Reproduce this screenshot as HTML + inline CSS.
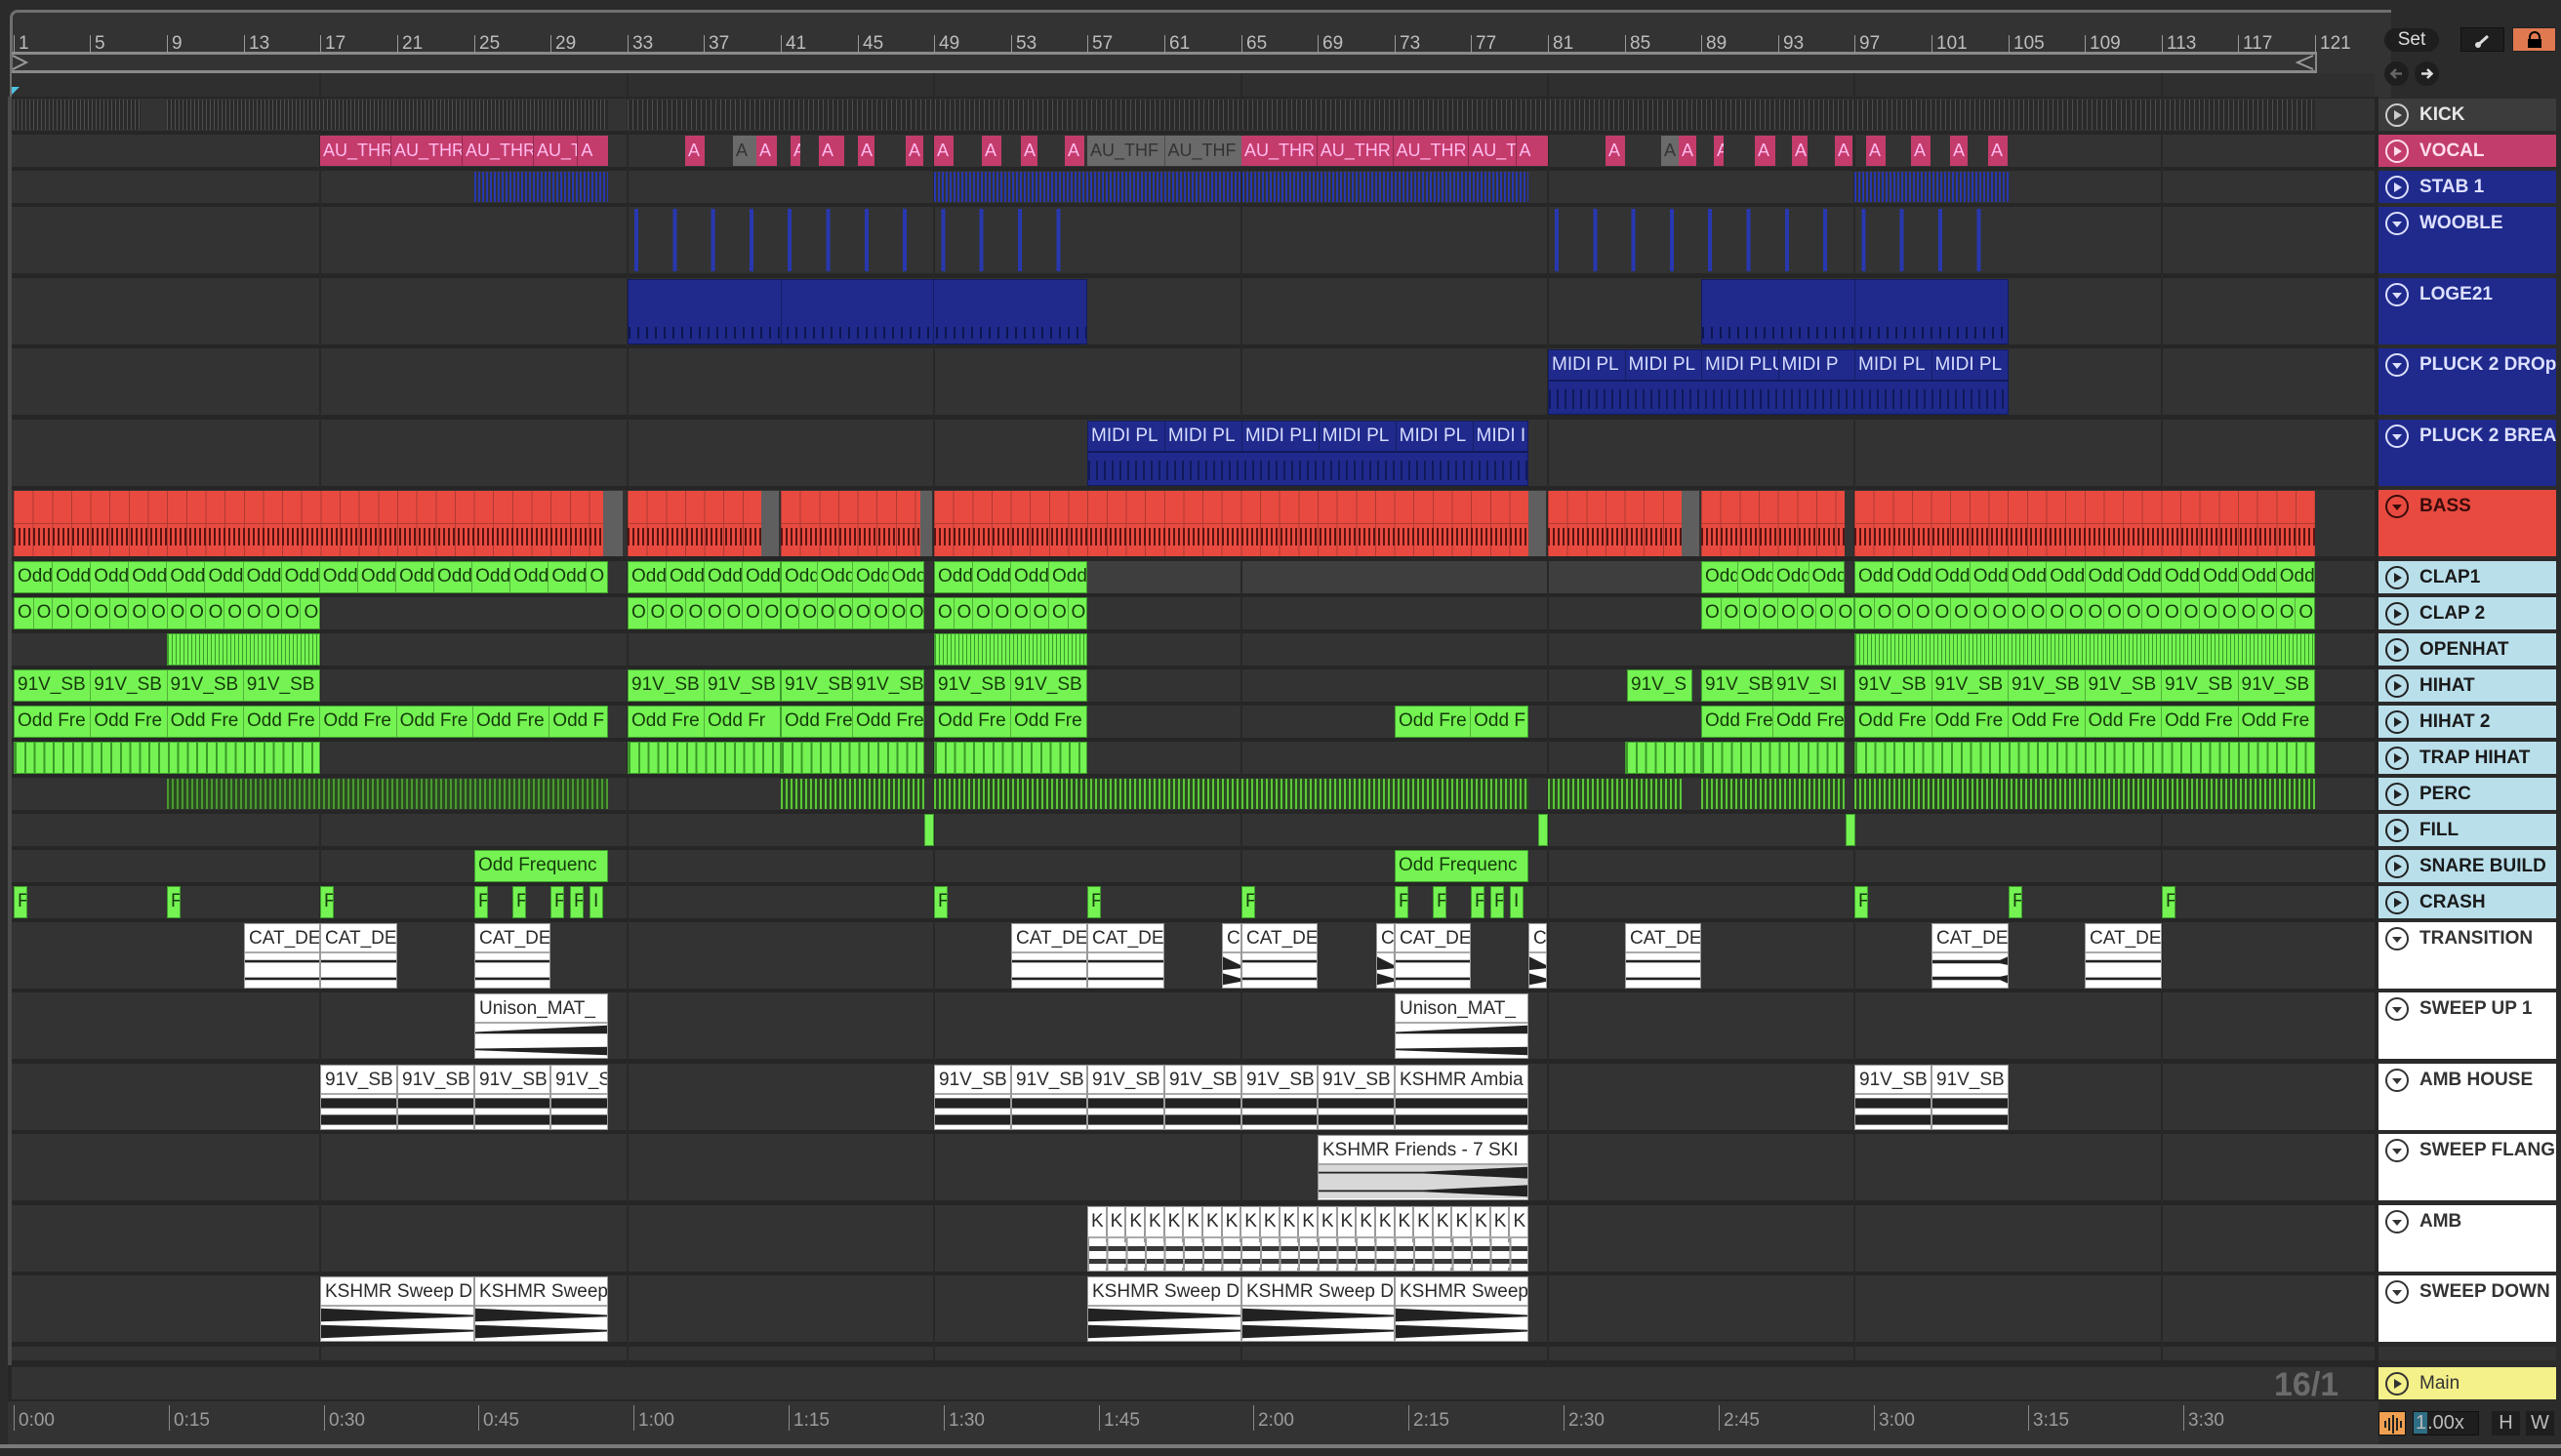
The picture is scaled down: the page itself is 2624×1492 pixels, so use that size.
<!DOCTYPE html>
<html><head><meta charset="utf-8"><style>
*{box-sizing:border-box}
body{margin:0;width:2624px;height:1492px;background:#2b2b2b;overflow:hidden;font-family:"Liberation Sans",sans-serif;position:relative}
.a{position:absolute}
.tr{position:absolute;left:12px;width:2421px;background:#333}
.vl{position:absolute;top:75px;height:1325px;width:2px;background:#282828}
.c{position:absolute;overflow:hidden;white-space:nowrap;display:flex;font-size:19px;line-height:30px}
.c i{font-style:normal;flex:1 1 0;min-width:0;overflow:hidden;padding-left:3px;border-right:1px solid rgba(0,0,0,.28)}
.c i:last-child{border-right:0}
.g{background:#74f352;color:#163a0c;border:1px solid #3f9e2e;height:33px}
.p{background:#c43c6c;color:#fbe;height:31px;font-size:18px}
.gr{background:#6a6a6a;color:#333;height:31px;font-size:18px}
.b{background:#1f2a8c;color:#d8ddff;border:1px solid #131c60}
.w{position:absolute;background:#fff;border:1px solid #9a9a9a;color:#2a2a2a;overflow:hidden;white-space:nowrap;font-size:19px;height:67px}
.w span{display:block;height:30px;line-height:30px;padding-left:4px;border-bottom:2px solid #aaa}
.w svg{display:block;width:100%;height:34px}
.h{position:absolute;left:2437px;width:182px;font-weight:bold;font-size:19px;padding-left:42px;line-height:33px;white-space:nowrap;overflow:hidden}
.h svg{position:absolute;left:6px;top:4px}
.rn{position:absolute;top:36px;color:#bdbdbd;font-size:19px;line-height:17px;border-left:1px solid #999;padding-left:4px;height:18px}
.tl{position:absolute;top:1440px;color:#9c9c9c;font-size:19px;border-left:1px solid #888;padding-left:4px;line-height:20px;height:26px;padding-top:6px}
</style></head><body>

<!-- top ruler -->
<div class="a" style="left:10px;top:10px;width:2440px;height:90px;border-top:3px solid #6f6f6f;border-left:3px solid #6f6f6f;border-top-left-radius:8px;background:#333"></div>
<div class="a" style="left:12px;top:53px;width:2362px;height:3px;background:#8a8a8a"></div>
<div class="a" style="left:12px;top:72px;width:2362px;height:3px;background:#8a8a8a"></div>
<div class="a" style="left:2372px;top:53px;width:2px;height:22px;background:#8a8a8a"></div>
<svg class="a" style="left:12px;top:56px" width="18" height="16"><path d="M1 1L15 8L1 15" fill="none" stroke="#999" stroke-width="2"/></svg>
<svg class="a" style="left:2350px;top:56px" width="22" height="16"><path d="M20 1L4 8L20 15" fill="none" stroke="#999" stroke-width="2"/></svg>
<div class="a" style="left:12px;top:75px;width:2421px;height:24px;background:#2f2f2f"></div>
<svg class="a" style="left:12px;top:89px" width="9" height="9"><path d="M0 0H8L0 8z" fill="#4fc3e0"/></svg>
<div class="rn" style="left:14px">1</div><div class="rn" style="left:92px">5</div><div class="rn" style="left:171px">9</div><div class="rn" style="left:250px">13</div><div class="rn" style="left:328px">17</div><div class="rn" style="left:407px">21</div><div class="rn" style="left:486px">25</div><div class="rn" style="left:564px">29</div><div class="rn" style="left:643px">33</div><div class="rn" style="left:721px">37</div><div class="rn" style="left:800px">41</div><div class="rn" style="left:879px">45</div><div class="rn" style="left:957px">49</div><div class="rn" style="left:1036px">53</div><div class="rn" style="left:1114px">57</div><div class="rn" style="left:1193px">61</div><div class="rn" style="left:1272px">65</div><div class="rn" style="left:1350px">69</div><div class="rn" style="left:1429px">73</div><div class="rn" style="left:1507px">77</div><div class="rn" style="left:1586px">81</div><div class="rn" style="left:1665px">85</div><div class="rn" style="left:1743px">89</div><div class="rn" style="left:1822px">93</div><div class="rn" style="left:1900px">97</div><div class="rn" style="left:1979px">101</div><div class="rn" style="left:2058px">105</div><div class="rn" style="left:2136px">109</div><div class="rn" style="left:2215px">113</div><div class="rn" style="left:2293px">117</div><div class="rn" style="left:2372px">121</div>

<!-- top right buttons -->
<div class="a" style="left:2443px;top:29px;width:56px;height:24px;border-radius:12px;background:#1e1e1e;color:#ddd;font-size:19px;text-align:center;line-height:24px">Set</div>
<div class="a" style="left:2521px;top:28px;width:45px;height:25px;background:#1e1e1e;border:1px solid #111"><svg width="45" height="25"><path d="M17 17L27 8" stroke="#ddd" stroke-width="3"/><circle cx="17" cy="17" r="3" fill="#ddd"/></svg></div>
<div class="a" style="left:2574px;top:28px;width:45px;height:25px;background:#e07850;border:1px solid #222"><svg width="45" height="25"><rect x="15" y="11" width="14" height="9" fill="#000"/><path d="M17 12V9a5 5 0 0 1 10 0v3" fill="none" stroke="#000" stroke-width="2"/></svg></div>
<div class="a" style="left:2443px;top:63px;width:25px;height:25px;border-radius:50%;background:#1e1e1e"><svg width="25" height="25"><path d="M18 12.5H8M12 8l-4.5 4.5L12 17" stroke="#666" stroke-width="2.5" fill="none"/></svg></div>
<div class="a" style="left:2474px;top:63px;width:25px;height:25px;border-radius:50%;background:#1e1e1e"><svg width="25" height="25"><path d="M7 12.5H17M13 8l4.5 4.5L13 17" stroke="#ddd" stroke-width="2.5" fill="none"/></svg></div>

<!-- arrangement background -->
<div class="a" style="left:8px;top:99px;width:2429px;height:1300px;background:#262626"></div>
<div class="a" style="left:8px;top:99px;width:4px;height:1300px;background:#4a4a4a"></div>
<div class="tr" style="top:101px;height:33px"></div>
<div class="tr" style="top:138px;height:33px"></div>
<div class="tr" style="top:175px;height:33px"></div>
<div class="tr" style="top:212px;height:68px"></div>
<div class="tr" style="top:285px;height:68px"></div>
<div class="tr" style="top:357px;height:68px"></div>
<div class="tr" style="top:430px;height:68px"></div>
<div class="tr" style="top:502px;height:68px"></div>
<div class="tr" style="top:575px;height:33px"></div>
<div class="a" style="left:1114px;top:575px;width:629px;height:33px;background:#3e3e3e"></div>
<div class="tr" style="top:612px;height:33px"></div>
<div class="tr" style="top:649px;height:33px"></div>
<div class="tr" style="top:686px;height:33px"></div>
<div class="tr" style="top:723px;height:33px"></div>
<div class="tr" style="top:760px;height:33px"></div>
<div class="tr" style="top:797px;height:33px"></div>
<div class="tr" style="top:834px;height:33px"></div>
<div class="tr" style="top:871px;height:33px"></div>
<div class="tr" style="top:908px;height:33px"></div>
<div class="tr" style="top:945px;height:68px"></div>
<div class="tr" style="top:1017px;height:68px"></div>
<div class="tr" style="top:1090px;height:68px"></div>
<div class="tr" style="top:1162px;height:68px"></div>
<div class="tr" style="top:1235px;height:68px"></div>
<div class="tr" style="top:1307px;height:68px"></div>
<div class="tr" style="top:1380px;height:14px"></div>
<div class="a" style="left:8px;top:1399px;width:2429px;height:37px;background:#262626"></div>
<div class="tr" style="top:1401px;height:33px"></div>
<div class="a" style="left:2330px;top:1400px;font-size:34px;font-weight:bold;color:#6b6b6b">16/1</div>
<div class="vl" style="left:327px"></div><div class="vl" style="left:642px"></div><div class="vl" style="left:956px"></div><div class="vl" style="left:1271px"></div><div class="vl" style="left:1585px"></div><div class="vl" style="left:1899px"></div><div class="vl" style="left:2214px"></div>

<!-- KICK -->
<div class="a" style="left:14px;top:102px;width:130px;height:31px;background:repeating-linear-gradient(90deg,#4e4e4e 0 1px,#2a2a2a 1px 4px)"></div>
<div class="a" style="left:171px;top:102px;width:452px;height:31px;background:repeating-linear-gradient(90deg,#4e4e4e 0 1px,#2a2a2a 1px 4px)"></div>
<div class="a" style="left:643px;top:102px;width:1729px;height:31px;background:repeating-linear-gradient(90deg,#4e4e4e 0 1px,#2a2a2a 1px 5px)"></div>

<!-- VOCAL -->
<div class="c p" style="left:328px;top:139px;width:295px"><i>AU_THR</i><i>AU_THR</i><i>AU_THR</i><i style="flex:0.6">AU_T</i><i style="flex:0.4">A</i></div>
<div class="c p" style="left:702px;top:139px;width:20px"><i>A</i></div>
<div class="c gr" style="left:751px;top:139px;width:24px"><i>A</i></div>
<div class="c p" style="left:775px;top:139px;width:21px"><i>A</i></div>
<div class="c p" style="left:810px;top:139px;width:10px"><i>A</i></div>
<div class="c p" style="left:839px;top:139px;width:26px"><i>A</i></div>
<div class="c p" style="left:879px;top:139px;width:17px"><i>A</i></div>
<div class="c p" style="left:928px;top:139px;width:18px"><i>A</i></div>
<div class="c p" style="left:957px;top:139px;width:20px"><i>A</i></div>
<div class="c p" style="left:1006px;top:139px;width:20px"><i>A</i></div>
<div class="c p" style="left:1046px;top:139px;width:17px"><i>A</i></div>
<div class="c p" style="left:1091px;top:139px;width:20px"><i>A</i></div>
<div class="c gr" style="left:1114px;top:139px;width:158px"><i>AU_THF</i><i>AU_THF</i></div>
<div class="c p" style="left:1272px;top:139px;width:314px"><i>AU_THR</i><i>AU_THR</i><i>AU_THR</i><i style="flex:0.6">AU_T</i><i style="flex:0.4">A</i></div>
<div class="c p" style="left:1645px;top:139px;width:20px"><i>A</i></div>
<div class="c gr" style="left:1702px;top:139px;width:18px"><i>A</i></div>
<div class="c p" style="left:1720px;top:139px;width:18px"><i>A</i></div>
<div class="c p" style="left:1756px;top:139px;width:10px"><i>A</i></div>
<div class="c p" style="left:1798px;top:139px;width:21px"><i>A</i></div>
<div class="c p" style="left:1836px;top:139px;width:16px"><i>A</i></div>
<div class="c p" style="left:1880px;top:139px;width:18px"><i>A</i></div>
<div class="c p" style="left:1912px;top:139px;width:20px"><i>A</i></div>
<div class="c p" style="left:1958px;top:139px;width:20px"><i>A</i></div>
<div class="c p" style="left:1998px;top:139px;width:18px"><i>A</i></div>
<div class="c p" style="left:2037px;top:139px;width:20px"><i>A</i></div>

<!-- STAB -->
<div class="a" style="left:486px;top:176px;width:137px;height:31px;background:repeating-linear-gradient(90deg,#2838b0 0 2px,transparent 2px 4px)"></div>
<div class="a" style="left:957px;top:176px;width:609px;height:31px;background:repeating-linear-gradient(90deg,#2838b0 0 2px,transparent 2px 4px)"></div>
<div class="a" style="left:1900px;top:176px;width:158px;height:31px;background:repeating-linear-gradient(90deg,#2838b0 0 2px,transparent 2px 4px)"></div>

<!-- WOOBLE -->
<div class="a" style="left:650px;top:214px;width:460px;height:64px;background:repeating-linear-gradient(90deg,#2838b0 0 4px,transparent 4px 39.3px)"></div>
<div class="a" style="left:1593px;top:214px;width:447px;height:64px;background:repeating-linear-gradient(90deg,#2838b0 0 4px,transparent 4px 39.3px)"></div>

<!-- LOGE21 -->
<div class="c b" style="left:643px;top:286px;width:471px;height:67px;background:repeating-linear-gradient(90deg,#0e1650 0 2px,transparent 2px 9px) 0 48px/100% 12px no-repeat,#1f2a8c"><i></i><i></i><i></i></div>
<div class="c b" style="left:1743px;top:286px;width:315px;height:67px;background:repeating-linear-gradient(90deg,#0e1650 0 2px,transparent 2px 9px) 0 48px/100% 12px no-repeat,#1f2a8c"><i></i><i></i></div>

<!-- PLUCK DROP / BREA -->
<div class="c b" style="left:1586px;top:358px;width:472px;height:67px;background:repeating-linear-gradient(90deg,#111a5a 0 2px,transparent 2px 8px) 0 40px/100% 20px no-repeat,#1f2a8c"><i style="border-bottom:2px solid #111a5a;height:32px">MIDI PL</i><i style="border-bottom:2px solid #111a5a;height:32px">MIDI PL</i><i style="border-bottom:2px solid #111a5a;height:32px">MIDI PLU</i><i style="border-bottom:2px solid #111a5a;height:32px">MIDI P</i><i style="border-bottom:2px solid #111a5a;height:32px">MIDI PL</i><i style="border-bottom:2px solid #111a5a;height:32px">MIDI PL</i></div>
<div class="c b" style="left:1114px;top:431px;width:452px;height:67px;background:repeating-linear-gradient(90deg,#111a5a 0 2px,transparent 2px 8px) 0 40px/100% 20px no-repeat,#1f2a8c"><i style="border-bottom:2px solid #111a5a;height:32px">MIDI PL</i><i style="border-bottom:2px solid #111a5a;height:32px">MIDI PL</i><i style="border-bottom:2px solid #111a5a;height:32px">MIDI PLI</i><i style="border-bottom:2px solid #111a5a;height:32px">MIDI PL</i><i style="border-bottom:2px solid #111a5a;height:32px">MIDI PL</i><i style="border-bottom:2px solid #111a5a;height:32px;flex:0.7">MIDI I</i></div>

<!-- BASS -->
<div class="a" style="left:14px;top:503px;width:604px;height:67px;background:repeating-linear-gradient(90deg,#5a1410 0 2px,transparent 2px 5px) 0 38px/100% 18px no-repeat,linear-gradient(#b03a32,#b03a32) 0 33px/100% 1px no-repeat,repeating-linear-gradient(90deg,#b03a32 0 1px,transparent 1px 19.65px),#e84a40"></div>
<div class="a" style="left:618px;top:503px;width:20px;height:67px;background:#5f5f5f"></div>
<div class="a" style="left:643px;top:503px;width:137px;height:67px;background:repeating-linear-gradient(90deg,#5a1410 0 2px,transparent 2px 5px) 0 38px/100% 18px no-repeat,linear-gradient(#b03a32,#b03a32) 0 33px/100% 1px no-repeat,repeating-linear-gradient(90deg,#b03a32 0 1px,transparent 1px 19.65px),#e84a40"></div>
<div class="a" style="left:780px;top:503px;width:18px;height:67px;background:#5f5f5f"></div>
<div class="a" style="left:800px;top:503px;width:143px;height:67px;background:repeating-linear-gradient(90deg,#5a1410 0 2px,transparent 2px 5px) 0 38px/100% 18px no-repeat,linear-gradient(#b03a32,#b03a32) 0 33px/100% 1px no-repeat,repeating-linear-gradient(90deg,#b03a32 0 1px,transparent 1px 19.65px),#e84a40"></div>
<div class="a" style="left:943px;top:503px;width:12px;height:67px;background:#5f5f5f"></div>
<div class="a" style="left:957px;top:503px;width:609px;height:67px;background:repeating-linear-gradient(90deg,#5a1410 0 2px,transparent 2px 5px) 0 38px/100% 18px no-repeat,linear-gradient(#b03a32,#b03a32) 0 33px/100% 1px no-repeat,repeating-linear-gradient(90deg,#b03a32 0 1px,transparent 1px 19.65px),#e84a40"></div>
<div class="a" style="left:1566px;top:503px;width:18px;height:67px;background:#5f5f5f"></div>
<div class="a" style="left:1586px;top:503px;width:137px;height:67px;background:repeating-linear-gradient(90deg,#5a1410 0 2px,transparent 2px 5px) 0 38px/100% 18px no-repeat,linear-gradient(#b03a32,#b03a32) 0 33px/100% 1px no-repeat,repeating-linear-gradient(90deg,#b03a32 0 1px,transparent 1px 19.65px),#e84a40"></div>
<div class="a" style="left:1723px;top:503px;width:18px;height:67px;background:#5f5f5f"></div>
<div class="a" style="left:1743px;top:503px;width:147px;height:67px;background:repeating-linear-gradient(90deg,#5a1410 0 2px,transparent 2px 5px) 0 38px/100% 18px no-repeat,linear-gradient(#b03a32,#b03a32) 0 33px/100% 1px no-repeat,repeating-linear-gradient(90deg,#b03a32 0 1px,transparent 1px 19.65px),#e84a40"></div>
<div class="a" style="left:1900px;top:503px;width:472px;height:67px;background:repeating-linear-gradient(90deg,#5a1410 0 2px,transparent 2px 5px) 0 38px/100% 18px no-repeat,linear-gradient(#b03a32,#b03a32) 0 33px/100% 1px no-repeat,repeating-linear-gradient(90deg,#b03a32 0 1px,transparent 1px 19.65px),#e84a40"></div>

<!-- CLAP1 -->
<div class="c g" style="left:14px;top:575px;width:609px"><i>Odd</i><i>Odd</i><i>Odd</i><i>Odd</i><i>Odd</i><i>Odd</i><i>Odd</i><i>Odd</i><i>Odd</i><i>Odd</i><i>Odd</i><i>Odd</i><i>Odd</i><i>Odd</i><i>Odd</i><i style="flex:.5">O</i></div>
<div class="c g" style="left:643px;top:575px;width:157px"><i>Odd</i><i>Odd</i><i>Odd</i><i>Odd</i></div>
<div class="c g" style="left:800px;top:575px;width:147px"><i>Odd</i><i>Odd</i><i>Odd</i><i>Odd</i></div>
<div class="c g" style="left:957px;top:575px;width:157px"><i>Odd</i><i>Odd</i><i>Odd</i><i>Odd</i></div>
<div class="c g" style="left:1743px;top:575px;width:147px"><i>Odd</i><i>Odd</i><i>Odd</i><i>Odd</i></div>
<div class="c g" style="left:1900px;top:575px;width:472px"><i>Odd</i><i>Odd</i><i>Odd</i><i>Odd</i><i>Odd</i><i>Odd</i><i>Odd</i><i>Odd</i><i>Odd</i><i>Odd</i><i>Odd</i><i>Odd</i></div>

<!-- CLAP2 -->
<div class="c g" style="left:14px;top:612px;width:314px"><i>O</i><i>O</i><i>O</i><i>O</i><i>O</i><i>O</i><i>O</i><i>O</i><i>O</i><i>O</i><i>O</i><i>O</i><i>O</i><i>O</i><i>O</i><i>O</i></div>
<div class="c g" style="left:643px;top:612px;width:157px"><i>O</i><i>O</i><i>O</i><i>O</i><i>O</i><i>O</i><i>O</i><i>O</i></div>
<div class="c g" style="left:800px;top:612px;width:147px"><i>O</i><i>O</i><i>O</i><i>O</i><i>O</i><i>O</i><i>O</i><i>O</i></div>
<div class="c g" style="left:957px;top:612px;width:157px"><i>O</i><i>O</i><i>O</i><i>O</i><i>O</i><i>O</i><i>O</i><i>O</i></div>
<div class="c g" style="left:1743px;top:612px;width:157px"><i>O</i><i>O</i><i>O</i><i>O</i><i>O</i><i>O</i><i>O</i><i>O</i></div>
<div class="c g" style="left:1900px;top:612px;width:472px"><i>O</i><i>O</i><i>O</i><i>O</i><i>O</i><i>O</i><i>O</i><i>O</i><i>O</i><i>O</i><i>O</i><i>O</i><i>O</i><i>O</i><i>O</i><i>O</i><i>O</i><i>O</i><i>O</i><i>O</i><i>O</i><i>O</i><i>O</i><i>O</i></div>

<!-- OPENHAT -->
<div class="c g" style="left:171px;top:649px;width:157px;background:repeating-linear-gradient(90deg,#3a9a28 0 1px,#74f352 1px 4px)"></div>
<div class="c g" style="left:957px;top:649px;width:157px;background:repeating-linear-gradient(90deg,#3a9a28 0 1px,#74f352 1px 4px)"></div>
<div class="c g" style="left:1900px;top:649px;width:472px;background:repeating-linear-gradient(90deg,#3a9a28 0 1px,#74f352 1px 4px)"></div>

<!-- HIHAT -->
<div class="c g" style="left:14px;top:686px;width:314px"><i>91V_SB</i><i>91V_SB</i><i>91V_SB</i><i>91V_SB</i></div>
<div class="c g" style="left:643px;top:686px;width:157px"><i>91V_SB</i><i>91V_SB</i></div>
<div class="c g" style="left:800px;top:686px;width:147px"><i>91V_SB</i><i>91V_SB</i></div>
<div class="c g" style="left:957px;top:686px;width:157px"><i>91V_SB</i><i>91V_SB</i></div>
<div class="c g" style="left:1667px;top:686px;width:67px"><i>91V_S</i></div>
<div class="c g" style="left:1743px;top:686px;width:147px"><i>91V_SB</i><i>91V_SI</i></div>
<div class="c g" style="left:1900px;top:686px;width:472px"><i>91V_SB</i><i>91V_SB</i><i>91V_SB</i><i>91V_SB</i><i>91V_SB</i><i>91V_SB</i></div>

<!-- HIHAT 2 -->
<div class="c g" style="left:14px;top:723px;width:609px"><i>Odd Fre</i><i>Odd Fre</i><i>Odd Fre</i><i>Odd Fre</i><i>Odd Fre</i><i>Odd Fre</i><i>Odd Fre</i><i style="flex:.75">Odd F</i></div>
<div class="c g" style="left:643px;top:723px;width:157px"><i>Odd Fre</i><i>Odd Fr</i></div>
<div class="c g" style="left:800px;top:723px;width:147px"><i>Odd Fre</i><i>Odd Fre</i></div>
<div class="c g" style="left:957px;top:723px;width:157px"><i>Odd Fre</i><i>Odd Fre</i></div>
<div class="c g" style="left:1429px;top:723px;width:137px"><i>Odd Fre</i><i style="flex:.75">Odd F</i></div>
<div class="c g" style="left:1743px;top:723px;width:147px"><i>Odd Fre</i><i>Odd Fre</i></div>
<div class="c g" style="left:1900px;top:723px;width:472px"><i>Odd Fre</i><i>Odd Fre</i><i>Odd Fre</i><i>Odd Fre</i><i>Odd Fre</i><i>Odd Fre</i></div>

<!-- TRAP HIHAT -->
<div class="c g" style="left:14px;top:760px;width:314px;background:repeating-linear-gradient(90deg,#3a9a28 0 2px,#74f352 2px 9.8px)"></div>
<div class="c g" style="left:643px;top:760px;width:157px;background:repeating-linear-gradient(90deg,#3a9a28 0 2px,#74f352 2px 9.8px)"></div>
<div class="c g" style="left:800px;top:760px;width:147px;background:repeating-linear-gradient(90deg,#3a9a28 0 2px,#74f352 2px 9.8px)"></div>
<div class="c g" style="left:957px;top:760px;width:157px;background:repeating-linear-gradient(90deg,#3a9a28 0 2px,#74f352 2px 9.8px)"></div>
<div class="c g" style="left:1665px;top:760px;width:78px;background:repeating-linear-gradient(90deg,#3a9a28 0 2px,#74f352 2px 9.8px)"></div>
<div class="c g" style="left:1743px;top:760px;width:147px;background:repeating-linear-gradient(90deg,#3a9a28 0 2px,#74f352 2px 9.8px)"></div>
<div class="c g" style="left:1900px;top:760px;width:472px;background:repeating-linear-gradient(90deg,#3a9a28 0 2px,#74f352 2px 9.8px)"></div>

<!-- PERC -->
<div class="a" style="left:171px;top:798px;width:452px;height:31px;background:repeating-linear-gradient(90deg,#4a9a30 0 2px,#2b4a22 2px 5px)"></div>
<div class="a" style="left:800px;top:798px;width:147px;height:31px;background:repeating-linear-gradient(90deg,#5cc83a 0 2px,#2b4a22 2px 5px)"></div>
<div class="a" style="left:957px;top:798px;width:609px;height:31px;background:repeating-linear-gradient(90deg,#5cc83a 0 2px,#2b4a22 2px 5px)"></div>
<div class="a" style="left:1586px;top:798px;width:137px;height:31px;background:repeating-linear-gradient(90deg,#5cc83a 0 2px,#2b4a22 2px 5px)"></div>
<div class="a" style="left:1743px;top:798px;width:147px;height:31px;background:repeating-linear-gradient(90deg,#5cc83a 0 2px,#2b4a22 2px 5px)"></div>
<div class="a" style="left:1900px;top:798px;width:472px;height:31px;background:repeating-linear-gradient(90deg,#5cc83a 0 2px,#2b4a22 2px 5px)"></div>

<!-- FILL -->
<div class="c g" style="left:947px;top:834px;width:10px"></div>
<div class="c g" style="left:1576px;top:834px;width:10px"></div>
<div class="c g" style="left:1891px;top:834px;width:10px"></div>

<!-- SNARE BUILD -->
<div class="c g" style="left:486px;top:871px;width:137px"><i>Odd Frequenc</i></div>
<div class="c g" style="left:1429px;top:871px;width:137px"><i>Odd Frequenc</i></div>

<!-- CRASH -->
<div class="c g" style="left:14px;top:908px;width:14px"><i>F</i></div>
<div class="c g" style="left:171px;top:908px;width:14px"><i>F</i></div>
<div class="c g" style="left:328px;top:908px;width:14px"><i>F</i></div>
<div class="c g" style="left:486px;top:908px;width:14px"><i>F</i></div>
<div class="c g" style="left:525px;top:908px;width:14px"><i>F</i></div>
<div class="c g" style="left:564px;top:908px;width:14px"><i>F</i></div>
<div class="c g" style="left:584px;top:908px;width:14px"><i>F</i></div>
<div class="c g" style="left:604px;top:908px;width:14px"><i>I</i></div>
<div class="c g" style="left:957px;top:908px;width:14px"><i>F</i></div>
<div class="c g" style="left:1114px;top:908px;width:14px"><i>F</i></div>
<div class="c g" style="left:1272px;top:908px;width:14px"><i>F</i></div>
<div class="c g" style="left:1429px;top:908px;width:14px"><i>F</i></div>
<div class="c g" style="left:1468px;top:908px;width:14px"><i>F</i></div>
<div class="c g" style="left:1507px;top:908px;width:14px"><i>F</i></div>
<div class="c g" style="left:1527px;top:908px;width:14px"><i>F</i></div>
<div class="c g" style="left:1547px;top:908px;width:14px"><i>I</i></div>
<div class="c g" style="left:1900px;top:908px;width:14px"><i>F</i></div>
<div class="c g" style="left:2058px;top:908px;width:14px"><i>F</i></div>
<div class="c g" style="left:2215px;top:908px;width:14px"><i>F</i></div>

<!-- TRANSITION -->
<div class="w" style="left:250px;top:946px;width:78px"><span>CAT_DE</span><svg viewBox="0 0 100 40" preserveAspectRatio="none"><path d="M0 8H100V11H0zM0 29H100V32H0z" fill="#222"/></svg></div>
<div class="w" style="left:328px;top:946px;width:79px"><span>CAT_DE</span><svg viewBox="0 0 100 40" preserveAspectRatio="none"><path d="M0 8H100V11H0zM0 29H100V32H0z" fill="#222"/></svg></div>
<div class="w" style="left:486px;top:946px;width:78px"><span>CAT_DE</span><svg viewBox="0 0 100 40" preserveAspectRatio="none"><path d="M0 8H100V11H0zM0 29H100V32H0z" fill="#222"/></svg></div>
<div class="w" style="left:1036px;top:946px;width:78px"><span>CAT_DE</span><svg viewBox="0 0 100 40" preserveAspectRatio="none"><path d="M0 8H100V11H0zM0 29H100V32H0z" fill="#222"/></svg></div>
<div class="w" style="left:1114px;top:946px;width:79px"><span>CAT_DE</span><svg viewBox="0 0 100 40" preserveAspectRatio="none"><path d="M0 8H100V11H0zM0 29H100V32H0z" fill="#222"/></svg></div>
<div class="w" style="left:1252px;top:946px;width:20px"><span>C</span><svg viewBox="0 0 100 40" preserveAspectRatio="none"><path d="M0 4L100 14V18L0 20zM0 24L100 30V34L0 38z" fill="#222"/></svg></div>
<div class="w" style="left:1272px;top:946px;width:78px"><span>CAT_DE</span><svg viewBox="0 0 100 40" preserveAspectRatio="none"><path d="M0 8H100V11H0zM0 29H100V32H0z" fill="#222"/></svg></div>
<div class="w" style="left:1410px;top:946px;width:19px"><span>C</span><svg viewBox="0 0 100 40" preserveAspectRatio="none"><path d="M0 4L100 14V18L0 20zM0 24L100 30V34L0 38z" fill="#222"/></svg></div>
<div class="w" style="left:1429px;top:946px;width:78px"><span>CAT_DE</span><svg viewBox="0 0 100 40" preserveAspectRatio="none"><path d="M0 8H100V11H0zM0 29H100V32H0z" fill="#222"/></svg></div>
<div class="w" style="left:1566px;top:946px;width:19px"><span>C</span><svg viewBox="0 0 100 40" preserveAspectRatio="none"><path d="M0 4L100 14V18L0 20zM0 24L100 30V34L0 38z" fill="#222"/></svg></div>
<div class="w" style="left:1665px;top:946px;width:78px"><span>CAT_DE</span><svg viewBox="0 0 100 40" preserveAspectRatio="none"><path d="M0 8H100V11H0zM0 29H100V32H0z" fill="#222"/></svg></div>
<div class="w" style="left:1979px;top:946px;width:79px"><span>CAT_DE</span><svg viewBox="0 0 100 40" preserveAspectRatio="none"><path d="M0 8H90L100 4V14L90 12H0zM0 28H90L100 26V36L90 32H0z" fill="#222"/></svg></div>
<div class="w" style="left:2136px;top:946px;width:79px"><span>CAT_DE</span><svg viewBox="0 0 100 40" preserveAspectRatio="none"><path d="M0 8H100V11H0zM0 29H100V32H0z" fill="#222"/></svg></div>

<!-- SWEEP UP 1 -->
<div class="w" style="left:486px;top:1018px;width:137px"><span>Unison_MAT_</span><svg viewBox="0 0 100 40" preserveAspectRatio="none"><path d="M0 10L100 2V12L0 12zM0 30L100 28V38L0 32z" fill="#222"/></svg></div>
<div class="w" style="left:1429px;top:1018px;width:137px"><span>Unison_MAT_</span><svg viewBox="0 0 100 40" preserveAspectRatio="none"><path d="M0 10L100 2V12L0 12zM0 30L100 28V38L0 32z" fill="#222"/></svg></div>

<!-- AMB HOUSE -->
<div class="w" style="left:328px;top:1091px;width:79px"><span>91V_SB</span><svg viewBox="0 0 100 40" preserveAspectRatio="none"><path d="M0 4H100V16H0zM0 24H100V36H0z" fill="#222"/></svg></div>
<div class="w" style="left:407px;top:1091px;width:79px"><span>91V_SB</span><svg viewBox="0 0 100 40" preserveAspectRatio="none"><path d="M0 4H100V16H0zM0 24H100V36H0z" fill="#222"/></svg></div>
<div class="w" style="left:486px;top:1091px;width:78px"><span>91V_SB</span><svg viewBox="0 0 100 40" preserveAspectRatio="none"><path d="M0 4H100V16H0zM0 24H100V36H0z" fill="#222"/></svg></div>
<div class="w" style="left:564px;top:1091px;width:59px"><span>91V_S</span><svg viewBox="0 0 100 40" preserveAspectRatio="none"><path d="M0 4H100V16H0zM0 24H100V36H0z" fill="#222"/></svg></div>
<div class="w" style="left:957px;top:1091px;width:79px"><span>91V_SB</span><svg viewBox="0 0 100 40" preserveAspectRatio="none"><path d="M0 4H100V16H0zM0 24H100V36H0z" fill="#222"/></svg></div>
<div class="w" style="left:1036px;top:1091px;width:78px"><span>91V_SB</span><svg viewBox="0 0 100 40" preserveAspectRatio="none"><path d="M0 4H100V16H0zM0 24H100V36H0z" fill="#222"/></svg></div>
<div class="w" style="left:1114px;top:1091px;width:79px"><span>91V_SB</span><svg viewBox="0 0 100 40" preserveAspectRatio="none"><path d="M0 4H100V16H0zM0 24H100V36H0z" fill="#222"/></svg></div>
<div class="w" style="left:1193px;top:1091px;width:79px"><span>91V_SB</span><svg viewBox="0 0 100 40" preserveAspectRatio="none"><path d="M0 4H100V16H0zM0 24H100V36H0z" fill="#222"/></svg></div>
<div class="w" style="left:1272px;top:1091px;width:78px"><span>91V_SB</span><svg viewBox="0 0 100 40" preserveAspectRatio="none"><path d="M0 4H100V16H0zM0 24H100V36H0z" fill="#222"/></svg></div>
<div class="w" style="left:1350px;top:1091px;width:79px"><span>91V_SB</span><svg viewBox="0 0 100 40" preserveAspectRatio="none"><path d="M0 4H100V16H0zM0 24H100V36H0z" fill="#222"/></svg></div>
<div class="w" style="left:1429px;top:1091px;width:137px"><span>KSHMR Ambia</span><svg viewBox="0 0 100 40" preserveAspectRatio="none"><path d="M0 4H100V16H0zM0 24H100V36H0z" fill="#222"/></svg></div>
<div class="w" style="left:1900px;top:1091px;width:79px"><span>91V_SB</span><svg viewBox="0 0 100 40" preserveAspectRatio="none"><path d="M0 4H100V16H0zM0 24H100V36H0z" fill="#222"/></svg></div>
<div class="w" style="left:1979px;top:1091px;width:79px"><span>91V_SB</span><svg viewBox="0 0 100 40" preserveAspectRatio="none"><path d="M0 4H100V16H0zM0 24H100V36H0z" fill="#222"/></svg></div>

<!-- SWEEP FLANG -->
<div class="w" style="left:1350px;top:1163px;width:216px"><span>KSHMR Friends - 7 SKI</span><svg viewBox="0 0 100 40" preserveAspectRatio="none" style="background:#d8d8d8"><path d="M0 8H50L100 2V16L50 10H0zM0 30H50L100 24V38L50 32H0z" fill="#222"/></svg></div>

<!-- AMB -->
<div class="c" style="left:1114px;top:1236px;width:452px;height:67px;background:#fff;border:1px solid #9a9a9a;color:#2a2a2a;font-size:19px"><i style="border-right:2px solid #999">K</i><i style="border-right:2px solid #999">K</i><i style="border-right:2px solid #999">K</i><i style="border-right:2px solid #999">K</i><i style="border-right:2px solid #999">K</i><i style="border-right:2px solid #999">K</i><i style="border-right:2px solid #999">K</i><i style="border-right:2px solid #999">K</i><i style="border-right:2px solid #999">K</i><i style="border-right:2px solid #999">K</i><i style="border-right:2px solid #999">K</i><i style="border-right:2px solid #999">K</i><i style="border-right:2px solid #999">K</i><i style="border-right:2px solid #999">K</i><i style="border-right:2px solid #999">K</i><i style="border-right:2px solid #999">K</i><i style="border-right:2px solid #999">K</i><i style="border-right:2px solid #999">K</i><i style="border-right:2px solid #999">K</i><i style="border-right:2px solid #999">K</i><i style="border-right:2px solid #999">K</i><i style="border-right:2px solid #999">K</i><i>K</i></div>
<div class="a" style="left:1115px;top:1267px;width:450px;height:2px;background:#aaa"></div>
<div class="a" style="left:1115px;top:1273px;width:450px;height:26px;background:linear-gradient(#fff 0 15%,#222 15% 35%,#fff 35% 65%,#222 65% 85%,#fff 85%);opacity:.9"></div>
<div class="a" style="left:1114px;top:1269px;width:452px;height:34px;background:repeating-linear-gradient(90deg,#999 0 2px,transparent 2px 19.65px)"></div>

<!-- SWEEP DOWN -->
<div class="w" style="left:328px;top:1308px;width:158px"><span>KSHMR Sweep D</span><svg viewBox="0 0 100 40" preserveAspectRatio="none"><path d="M0 2L100 10V12L0 18zM0 22L100 28V30L0 38z" fill="#222"/></svg></div>
<div class="w" style="left:486px;top:1308px;width:137px"><span>KSHMR Sweep</span><svg viewBox="0 0 100 40" preserveAspectRatio="none"><path d="M0 2L100 10V12L0 18zM0 22L100 28V30L0 38z" fill="#222"/></svg></div>
<div class="w" style="left:1114px;top:1308px;width:158px"><span>KSHMR Sweep D</span><svg viewBox="0 0 100 40" preserveAspectRatio="none"><path d="M0 2L100 10V12L0 18zM0 22L100 28V30L0 38z" fill="#222"/></svg></div>
<div class="w" style="left:1272px;top:1308px;width:157px"><span>KSHMR Sweep D</span><svg viewBox="0 0 100 40" preserveAspectRatio="none"><path d="M0 2L100 10V12L0 18zM0 22L100 28V30L0 38z" fill="#222"/></svg></div>
<div class="w" style="left:1429px;top:1308px;width:137px"><span>KSHMR Sweep</span><svg viewBox="0 0 100 40" preserveAspectRatio="none"><path d="M0 2L100 10V12L0 18zM0 22L100 28V30L0 38z" fill="#222"/></svg></div>

<!-- track headers -->
<div class="h" style="top:101px;height:33px;background:#3c3c3c;color:#e6e6e6"><svg width="26" height="26"><circle cx="13" cy="13" r="11" fill="none" stroke="#ccc" stroke-width="2"/><path d="M10 8v10l8-5z" fill="#ccc"/></svg>KICK</div>
<div class="h" style="top:138px;height:33px;background:#c23d6b;color:#fde"><svg width="26" height="26"><circle cx="13" cy="13" r="11" fill="none" stroke="#fde" stroke-width="2"/><path d="M10 8v10l8-5z" fill="#fde"/></svg>VOCAL</div>
<div class="h" style="top:175px;height:33px;background:#1f2a8c;color:#dde0ff"><svg width="26" height="26"><circle cx="13" cy="13" r="11" fill="none" stroke="#dde0ff" stroke-width="2"/><path d="M10 8v10l8-5z" fill="#dde0ff"/></svg>STAB 1</div>
<div class="h" style="top:212px;height:68px;background:#1f2a8c;color:#dde0ff"><svg width="26" height="26"><circle cx="13" cy="13" r="11" fill="none" stroke="#dde0ff" stroke-width="2"/><path d="M8 11h10l-5 6z" fill="#dde0ff"/></svg>WOOBLE</div>
<div class="h" style="top:285px;height:68px;background:#1f2a8c;color:#dde0ff"><svg width="26" height="26"><circle cx="13" cy="13" r="11" fill="none" stroke="#dde0ff" stroke-width="2"/><path d="M8 11h10l-5 6z" fill="#dde0ff"/></svg>LOGE21</div>
<div class="h" style="top:357px;height:68px;background:#1f2a8c;color:#dde0ff"><svg width="26" height="26"><circle cx="13" cy="13" r="11" fill="none" stroke="#dde0ff" stroke-width="2"/><path d="M8 11h10l-5 6z" fill="#dde0ff"/></svg>PLUCK 2 DROp</div>
<div class="h" style="top:430px;height:68px;background:#1f2a8c;color:#dde0ff"><svg width="26" height="26"><circle cx="13" cy="13" r="11" fill="none" stroke="#dde0ff" stroke-width="2"/><path d="M8 11h10l-5 6z" fill="#dde0ff"/></svg>PLUCK 2 BREA</div>
<div class="h" style="top:502px;height:68px;background:#e84a40;color:#3a0c0a"><svg width="26" height="26"><circle cx="13" cy="13" r="11" fill="none" stroke="#3a0c0a" stroke-width="2"/><path d="M8 11h10l-5 6z" fill="#3a0c0a"/></svg>BASS</div>
<div class="h" style="top:575px;height:33px;background:#b9dfeb;color:#1a1a1a"><svg width="26" height="26"><circle cx="13" cy="13" r="11" fill="none" stroke="#222" stroke-width="2"/><path d="M10 8v10l8-5z" fill="#222"/></svg>CLAP1</div>
<div class="h" style="top:612px;height:33px;background:#b9dfeb;color:#1a1a1a"><svg width="26" height="26"><circle cx="13" cy="13" r="11" fill="none" stroke="#222" stroke-width="2"/><path d="M10 8v10l8-5z" fill="#222"/></svg>CLAP 2</div>
<div class="h" style="top:649px;height:33px;background:#b9dfeb;color:#1a1a1a"><svg width="26" height="26"><circle cx="13" cy="13" r="11" fill="none" stroke="#222" stroke-width="2"/><path d="M10 8v10l8-5z" fill="#222"/></svg>OPENHAT</div>
<div class="h" style="top:686px;height:33px;background:#b9dfeb;color:#1a1a1a"><svg width="26" height="26"><circle cx="13" cy="13" r="11" fill="none" stroke="#222" stroke-width="2"/><path d="M10 8v10l8-5z" fill="#222"/></svg>HIHAT</div>
<div class="h" style="top:723px;height:33px;background:#b9dfeb;color:#1a1a1a"><svg width="26" height="26"><circle cx="13" cy="13" r="11" fill="none" stroke="#222" stroke-width="2"/><path d="M10 8v10l8-5z" fill="#222"/></svg>HIHAT 2</div>
<div class="h" style="top:760px;height:33px;background:#b9dfeb;color:#1a1a1a"><svg width="26" height="26"><circle cx="13" cy="13" r="11" fill="none" stroke="#222" stroke-width="2"/><path d="M10 8v10l8-5z" fill="#222"/></svg>TRAP HIHAT</div>
<div class="h" style="top:797px;height:33px;background:#b9dfeb;color:#1a1a1a"><svg width="26" height="26"><circle cx="13" cy="13" r="11" fill="none" stroke="#222" stroke-width="2"/><path d="M10 8v10l8-5z" fill="#222"/></svg>PERC</div>
<div class="h" style="top:834px;height:33px;background:#b9dfeb;color:#1a1a1a"><svg width="26" height="26"><circle cx="13" cy="13" r="11" fill="none" stroke="#222" stroke-width="2"/><path d="M10 8v10l8-5z" fill="#222"/></svg>FILL</div>
<div class="h" style="top:871px;height:33px;background:#b9dfeb;color:#1a1a1a"><svg width="26" height="26"><circle cx="13" cy="13" r="11" fill="none" stroke="#222" stroke-width="2"/><path d="M10 8v10l8-5z" fill="#222"/></svg>SNARE BUILD</div>
<div class="h" style="top:908px;height:33px;background:#b9dfeb;color:#1a1a1a"><svg width="26" height="26"><circle cx="13" cy="13" r="11" fill="none" stroke="#222" stroke-width="2"/><path d="M10 8v10l8-5z" fill="#222"/></svg>CRASH</div>
<div class="h" style="top:945px;height:68px;background:#fff;color:#333"><svg width="26" height="26"><circle cx="13" cy="13" r="11" fill="none" stroke="#333" stroke-width="2"/><path d="M8 11h10l-5 6z" fill="#333"/></svg>TRANSITION</div>
<div class="h" style="top:1017px;height:68px;background:#fff;color:#333"><svg width="26" height="26"><circle cx="13" cy="13" r="11" fill="none" stroke="#333" stroke-width="2"/><path d="M8 11h10l-5 6z" fill="#333"/></svg>SWEEP UP 1</div>
<div class="h" style="top:1090px;height:68px;background:#fff;color:#333"><svg width="26" height="26"><circle cx="13" cy="13" r="11" fill="none" stroke="#333" stroke-width="2"/><path d="M8 11h10l-5 6z" fill="#333"/></svg>AMB HOUSE</div>
<div class="h" style="top:1162px;height:68px;background:#fff;color:#333"><svg width="26" height="26"><circle cx="13" cy="13" r="11" fill="none" stroke="#333" stroke-width="2"/><path d="M8 11h10l-5 6z" fill="#333"/></svg>SWEEP FLANG</div>
<div class="h" style="top:1235px;height:68px;background:#fff;color:#333"><svg width="26" height="26"><circle cx="13" cy="13" r="11" fill="none" stroke="#333" stroke-width="2"/><path d="M8 11h10l-5 6z" fill="#333"/></svg>AMB</div>
<div class="h" style="top:1307px;height:68px;background:#fff;color:#333"><svg width="26" height="26"><circle cx="13" cy="13" r="11" fill="none" stroke="#333" stroke-width="2"/><path d="M8 11h10l-5 6z" fill="#333"/></svg>SWEEP DOWN</div>
<div class="a" style="left:2437px;top:1380px;width:182px;height:14px;background:#333"></div>
<div class="h" style="top:1401px;height:33px;background:#f4f08a;color:#333;font-weight:normal"><svg width="26" height="26"><circle cx="13" cy="13" r="11" fill="none" stroke="#333" stroke-width="2"/><path d="M10 8v10l8-5z" fill="#333"/></svg>Main</div>

<!-- bottom time ruler -->
<div class="a" style="left:8px;top:1436px;width:2429px;height:44px;background:#333"></div>
<div class="tl" style="left:14px">0:00</div><div class="tl" style="left:173px">0:15</div><div class="tl" style="left:332px">0:30</div><div class="tl" style="left:490px">0:45</div><div class="tl" style="left:649px">1:00</div><div class="tl" style="left:808px">1:15</div><div class="tl" style="left:967px">1:30</div><div class="tl" style="left:1126px">1:45</div><div class="tl" style="left:1284px">2:00</div><div class="tl" style="left:1443px">2:15</div><div class="tl" style="left:1602px">2:30</div><div class="tl" style="left:1761px">2:45</div><div class="tl" style="left:1920px">3:00</div><div class="tl" style="left:2078px">3:15</div><div class="tl" style="left:2237px">3:30</div>
<div class="a" style="left:2437px;top:1446px;width:28px;height:25px;background:#f0a050;border:1px solid #111"><svg width="28" height="25"><path d="M6 9v7M10 6v13M14 3v19M18 6v13M22 9v7" stroke="#222" stroke-width="2"/></svg></div>
<div class="a" style="left:2472px;top:1446px;width:68px;height:25px;background:#1e1e1e;border:1px solid #111;color:#bbb;font-size:20px;line-height:23px"><span style="background:#2e6e84;padding:0 1px 0 2px">1</span>.00x</div>
<div class="a" style="left:2553px;top:1446px;width:29px;height:25px;background:#1e1e1e;color:#bbb;font-size:20px;text-align:center;line-height:25px">H</div>
<div class="a" style="left:2588px;top:1446px;width:29px;height:25px;background:#1e1e1e;color:#bbb;font-size:20px;text-align:center;line-height:25px">W</div>
<div class="a" style="left:0;top:1480px;width:2624px;height:4px;background:#7a7a7a"></div>
</body></html>
